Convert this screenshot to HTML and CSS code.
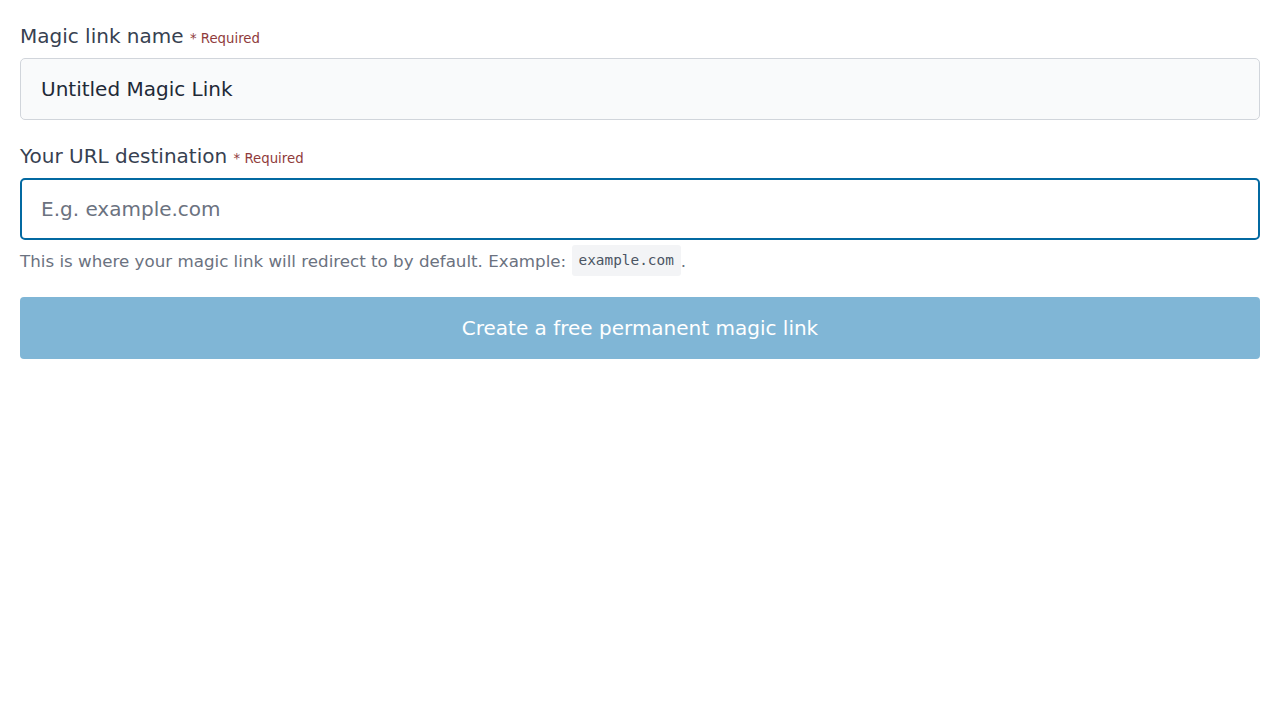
FILE: index.html
```html
<!DOCTYPE html>
<html>
<head>
<meta charset="utf-8">
<link rel="stylesheet" href="styles.css">
</head>
<body>
<form class="form">
  <div class="field">
    <label class="label" for="name">Magic link name <span class="req">* Required</span></label>
    <input id="name" class="input input-filled" type="text" value="Untitled Magic Link">
  </div>
  <div class="field">
    <label class="label" for="url">Your URL destination <span class="req">* Required</span></label>
    <input id="url" class="input input-focus" type="text" placeholder="E.g. example.com">
    <p class="help">This is where your magic link will redirect to by default. Example: <code class="code">example.com</code>.</p>
  </div>
  <button class="btn" type="button">Create a free permanent magic link</button>
</form>
</body>
</html>
```
FILE: styles.css
```css
html, body {
  margin: 0;
  padding: 0;
  background: #ffffff;
}
body {
  font-family: "DejaVu Sans", sans-serif;
  color: #374151;
}
.form {
  padding: 20px;
  display: flex;
  flex-direction: column;
}
.field {
  display: flex;
  flex-direction: column;
  margin-bottom: 20px;
}
.label {
  font-size: 20px;
  line-height: 28px;
  padding-top: 2px;
  margin-bottom: 5px;
  color: #374151;
}
.req {
  font-size: 13.3px;
  color: #8f3b3b;
}
.input {
  box-sizing: border-box;
  height: 62px;
  width: 100%;
  font-family: "DejaVu Sans", sans-serif;
  font-size: 20px;
  border-radius: 5px;
  padding: 0 20px;
  outline: none;
}
.input-filled {
  background: #f9fafb;
  border: 1px solid #d1d5db;
  color: #1f2937;
}
.input-focus {
  background: #ffffff;
  border: 2px solid #0369a1;
  padding: 0 19px;
  color: #1f2937;
}
.input-focus::placeholder {
  color: #6b7280;
  opacity: 1;
}
.help {
  margin: 5px 0 0;
  font-size: 16.7px;
  line-height: 32px;
  color: #6b7280;
}
.code {
  display: inline-block;
  font-family: "DejaVu Sans Mono", monospace;
  font-size: 14.4px;
  line-height: 17px;
  padding: 7px 7px;
  background: #f3f4f6;
  border-radius: 3px;
  color: #4b5563;
  vertical-align: 2px;
}
.btn {
  height: 62px;
  width: 100%;
  border: none;
  border-radius: 4px;
  background: #80b6d6;
  color: #ffffff;
  font-family: "DejaVu Sans", sans-serif;
  font-size: 20px;
  margin-top: 0;
}
```
